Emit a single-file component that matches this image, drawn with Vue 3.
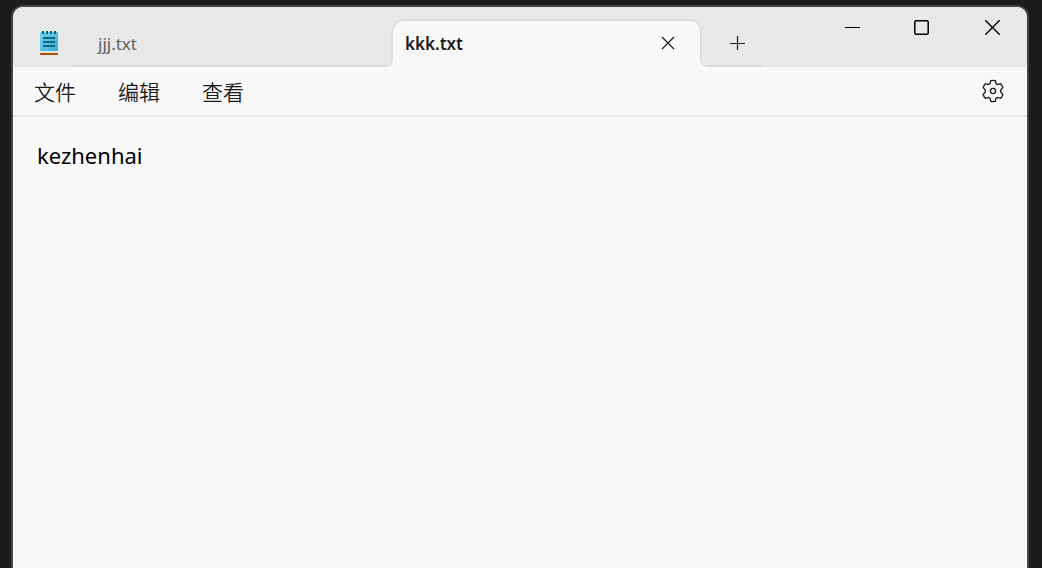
<script setup>
import { ref } from 'vue'

const tabs = ref([
  { id: 1, name: 'jjj.txt', text: '' },
  { id: 2, name: 'kkk.txt', text: 'kezhenhai' }
])
const activeId = ref(2)
const menus = ['文件', '编辑', '查看']
const content = ref('kezhenhai')

function select(tab) {
  activeId.value = tab.id
  content.value = tab.text
}
</script>

<template>
  <div class="desktop">
    <main class="window">
      <header class="titlebar">
        <div class="app-icon">
          <svg width="20" height="26" viewBox="0 0 20 26" aria-hidden="true">
            <defs>
              <linearGradient id="paper" x1="0" y1="0" x2="1" y2="1">
                <stop offset="0" stop-color="#70d8f4" />
                <stop offset="1" stop-color="#3fa9cc" />
              </linearGradient>
            </defs>
            <rect x="1" y="22" width="18" height="3" rx="1" fill="#ad5100" />
            <rect x="1" y="20" width="18" height="3" fill="#e9e5e2" />
            <rect x="1" y="2" width="18" height="19" rx="1" fill="url(#paper)" />
            <path d="M4 1v3M8 1v3M12 1v3M16 1v3" stroke="#14647e" stroke-width="2" />
            <path d="M4 8h12M4 12h12M4 16h12" stroke="#0a6687" stroke-width="2" />
          </svg>
        </div>
        <nav class="tabs">
          <div
            v-for="tab in tabs"
            :key="tab.id"
            class="tab"
            :class="{ active: tab.id === activeId }"
          >
            <button class="tab-name" type="button" @click="select(tab)">{{ tab.name }}</button>
            <button v-if="tab.id === activeId" class="tab-close" type="button" aria-label="关闭标签页">
              <svg width="14" height="14" viewBox="0 0 14 14" aria-hidden="true">
                <path d="M1 1l12 12M13 1L1 13" fill="none" stroke="#1c1c1c" stroke-width="1.2" />
              </svg>
            </button>
          </div>
          <button class="add" type="button" aria-label="新建标签页">
            <svg width="16" height="16" viewBox="0 0 16 16" aria-hidden="true">
              <path d="M8.5 1v14M1 8.5h15" fill="none" stroke="#1c1c1c" stroke-width="1.2" />
            </svg>
          </button>
        </nav>
        <div class="controls">
          <button type="button" aria-label="最小化">
            <svg width="16" height="16" viewBox="0 0 16 16" aria-hidden="true">
              <path d="M1 8.5h15" stroke="#000" stroke-width="1" />
            </svg>
          </button>
          <button type="button" aria-label="最大化">
            <svg width="16" height="16" viewBox="0 0 16 16" aria-hidden="true">
              <rect x=".8" y="1.8" width="13.4" height="13.4" rx="1.3" fill="none" stroke="#000" stroke-width="1.5" />
            </svg>
          </button>
          <button type="button" aria-label="关闭">
            <svg width="16" height="16" viewBox="0 0 16 16" aria-hidden="true">
              <path d="M1.3 1.3l14.4 14.4M15.7 1.3L1.3 15.7" fill="none" stroke="#000" stroke-width="1.4" />
            </svg>
          </button>
        </div>
      </header>

      <div class="menubar">
        <button v-for="menu in menus" :key="menu" class="menu" type="button">{{ menu }}</button>
        <button class="settings" type="button" aria-label="设置">
          <svg width="24" height="24" viewBox="0 0 24 24" aria-hidden="true">
            <g fill="none" stroke="#222" stroke-width="1.4" stroke-linejoin="round">
              <path d="M9.7 1.7Q12 1.1 14.3 1.7L14.8 4.1Q15.4 5.8 17.2 5.4L19.6 4.7Q21.3 6.4 21.9 8.6L20.1 10.4Q18.9 12 20.1 13.6L21.9 15.4Q21.3 17.6 19.6 19.3L17.2 18.6Q15.4 18.2 14.8 19.9L14.3 22.3Q12 22.9 9.7 22.3L9.2 19.9Q8.6 18.2 6.8 18.6L4.4 19.3Q2.7 17.6 2.1 15.4L3.9 13.6Q5.1 12 3.9 10.4L2.1 8.6Q2.7 6.4 4.4 4.7L6.8 5.4Q8.6 5.8 9.2 4.1Z" />
              <circle cx="12" cy="12" r="2.6" />
            </g>
          </svg>
        </button>
      </div>

      <textarea v-model="content" class="editor" aria-label="文本编辑器" spellcheck="false"></textarea>
    </main>
  </div>
</template>

<style>
body {
  margin: 0;
  background: #1b1b1b;
}
</style>

<style scoped>
.desktop {
  box-sizing: border-box;
  height: 100vh;
  padding: 5px 13px 0 11px;
  overflow: hidden;
  display: flex;
  background: #1b1b1b;
  font-family: "Noto Sans", "Noto Sans CJK SC", sans-serif;
}

.window {
  flex: 1;
  min-width: 0;
  display: flex;
  flex-direction: column;
  overflow: hidden;
  border: 2px solid #434343;
  border-bottom: 0;
  border-radius: 12px 12px 0 0;
  background: #f9f9f9;
}

button {
  display: flex;
  align-items: center;
  justify-content: center;
  padding: 0;
  border: 0;
  background: none;
  color: #1b1b1b;
  font: inherit;
}

.titlebar {
  display: flex;
  height: 60px;
  flex: none;
  background: #e8e8e8;
}

.app-icon {
  width: 60px;
  box-sizing: border-box;
  padding: 23px 0 0 26px;
  flex: none;
}

.app-icon svg {
  display: block;
}

.tabs {
  display: flex;
  flex: 1;
  min-width: 0;
  padding-top: 12px;
}

.tab {
  box-sizing: border-box;
  display: flex;
  flex: 0 1 318px;
  min-width: 0;
  border-bottom: 2px solid #d9d9d9;
}

.tab-name {
  flex: 1;
  justify-content: flex-start;
  padding: 4px 0 0 25px;
  color: #5f5f5f;
  font-size: 17px;
  line-height: 24px;
}

.active {
  position: relative;
  flex-basis: 311px;
  border: 2px solid #dedede;
  border-bottom: 0;
  border-radius: 13px 13px 0 0;
  background: #f8f8f8;
}

.active::before,
.active::after {
  content: "";
  position: absolute;
  bottom: 0;
  width: 6px;
  height: 6px;
}

.active::before {
  right: 100%;
  background: radial-gradient(circle at 0 0, #e8e8e8 4px, #d9d9d9 5px, #f8f8f8 6px);
}

.active::after {
  left: 100%;
  background: radial-gradient(circle at 100% 0, #e8e8e8 4px, #d9d9d9 5px, #f8f8f8 6px);
}

.active .tab-name {
  padding: 0 0 0 12px;
  color: #1b1b1b;
  font-weight: 600;
}

.tab-close {
  width: 64px;
  padding-bottom: 2px;
}

.add {
  width: 60px;
  flex: none;
  padding: 2px 0 0 10px;
  border-bottom: 2px solid #d9d9d9;
}

.controls {
  display: flex;
  height: 40px;
  flex: none;
}

.controls button {
  width: 70px;
}

.menubar {
  display: flex;
  height: 48px;
  flex: none;
  border-bottom: 2px solid #e9e9e9;
  background: #f8f8f8;
}

.menu {
  width: 84px;
  font-size: 21px;
  font-weight: 350;
}

.settings {
  width: 68px;
  margin-left: auto;
}

.editor {
  flex: 1;
  padding: 22px 24px;
  border: 0;
  outline: 0;
  resize: none;
  background: #f9f9f9;
  color: #000;
  font-family: "Noto Sans", "Noto Sans CJK SC", sans-serif;
  font-size: 22px;
  line-height: 32px;
}
</style>
